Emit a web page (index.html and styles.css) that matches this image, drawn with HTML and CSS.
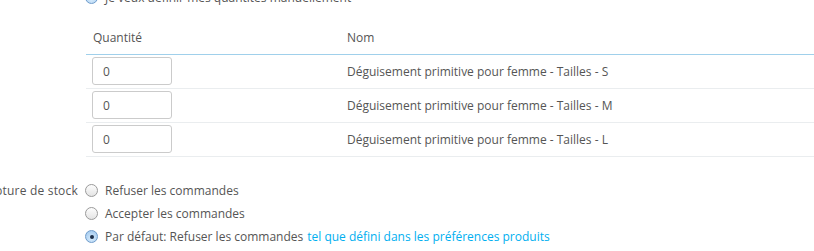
FILE: index.html
```html
<!DOCTYPE html>
<html lang="fr">
<head>
  <meta charset="UTF-8" />
  <title>Quantités</title>
  <link rel="stylesheet" href="styles.css">
</head>
<body>

<!-- choix manuel -->
  <div class="manual-option">
    <span class="radio checked"></span>
    <span>Je veux définir mes quantités manuellement</span>
  </div>

<!-- tableau des quantités -->
  <table class="qty-table">
    <thead>
      <tr>
        <th class="col-qty">Quantité</th>
        <th>Nom</th>
      </tr>
    </thead>
    <tbody>
      <tr>
        <td><input type="text" class="qty-input" value="0"></td>
        <td class="name">Déguisement primitive pour femme - Tailles - S</td>
      </tr>
      <tr>
        <td><input type="text" class="qty-input" value="0"></td>
        <td class="name">Déguisement primitive pour femme - Tailles - M</td>
      </tr>
      <tr>
        <td><input type="text" class="qty-input" value="0"></td>
        <td class="name">Déguisement primitive pour femme - Tailles - L</td>
      </tr>
    </tbody>
  </table>

<!-- rupture de stock -->
  <div class="form-row">
    <div class="form-label"><span>Comportement en cas de rupture de stock</span></div>
    <div class="options">
      <label class="option"><span class="radio"></span>Refuser les commandes</label>
      <label class="option"><span class="radio"></span>Accepter les commandes</label>
      <label class="option"><span class="radio checked"></span>Par défaut: Refuser les commandes <a href="#">tel que défini dans les préférences produits</a></label>
    </div>
  </div>

</body>
</html>
```

FILE: styles.css
```css
* {
  margin: 0;
  padding: 0;
  box-sizing: border-box;
}

body {
  font-family: 'Open Sans', 'Liberation Sans', sans-serif;
  font-size: 12px;
  color: #555;
  background: #fff;
  overflow: hidden;
}

a {
  color: #00aff0;
  text-decoration: none;
}

/* boutons radio */
.radio {
  display: inline-block;
  width: 13px;
  height: 13px;
  border-radius: 50%;
  border: 1px solid #9a9a9a;
  background: linear-gradient(#fdfdfd, #e4e4e4);
  position: relative;
  flex-shrink: 0;
}

.radio.checked {
  border-color: #6f9ccb;
  background: radial-gradient(circle at 50% 70%, #d6ebfc, #9cc5ec);
}

.radio.checked::after {
  content: '';
  position: absolute;
  top: 4px;
  left: 4px;
  width: 4px;
  height: 4px;
  border-radius: 50%;
  background: #1c2f4a;
}

.manual-option {
  display: flex;
  align-items: center;
  gap: 7px;
  margin: -11px 0 0 85px;
  height: 16px;
}

/* tableau */
.qty-table {
  border-collapse: collapse;
  margin: 17px 0 0 86px;
  width: 728px;
}

.qty-table th {
  text-align: left;
  font-weight: normal;
  height: 32px;
  padding: 0 7px;
  border-bottom: 1px solid #a0d0eb;
}

.qty-table th.col-qty {
  width: 254px;
}

.qty-table td {
  height: 34px;
  padding: 0 6px;
  border-bottom: 1px solid #eaedef;
}

.qty-table td.name {
  padding-left: 7px;
}

.qty-input {
  display: block;
  width: 80px;
  height: 28px;
  border: 1px solid #cbcbcb;
  border-radius: 3px;
  padding: 0 10px;
  font-family: inherit;
  font-size: 12px;
  color: #555;
}

/* comportement de stock */
.form-row {
  display: flex;
  gap: 7px;
  margin-top: 22px;
}

.form-label {
  width: 78px;
  display: flex;
  justify-content: flex-end;
  overflow: hidden;
  white-space: nowrap;
  height: 23px;
  align-items: center;
  letter-spacing: 0.2px;
}

.options {
  display: flex;
  flex-direction: column;
}

.option {
  display: flex;
  align-items: center;
  gap: 7px;
  height: 23px;
  white-space: nowrap;
}

.option a {
  margin-left: -3px;
}
```
